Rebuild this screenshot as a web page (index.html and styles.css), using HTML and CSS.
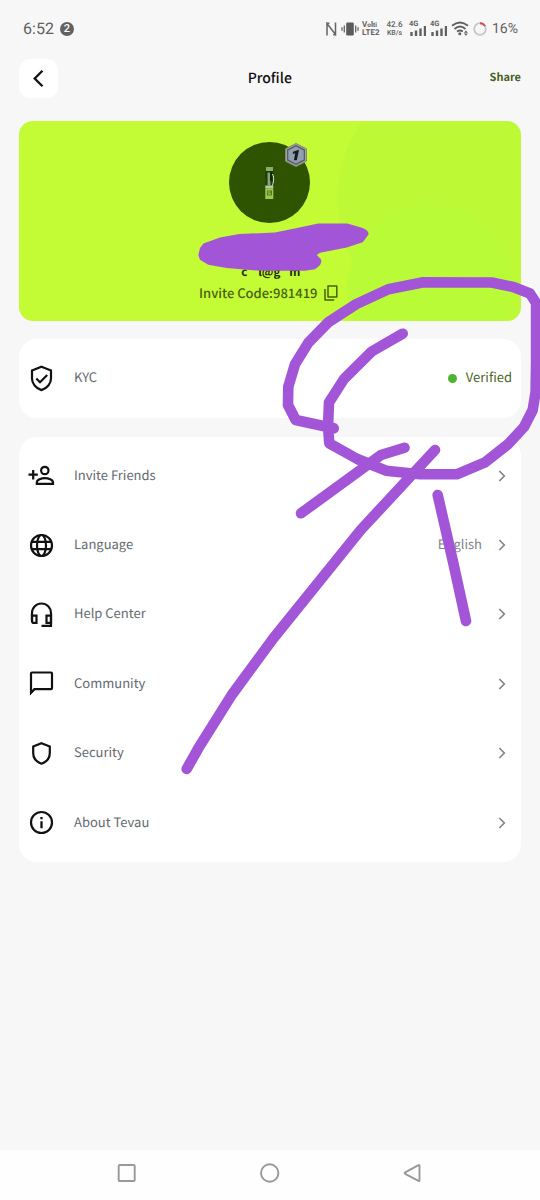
FILE: index.html
```html
<!DOCTYPE html>
<html lang="en">
<head>
<meta charset="utf-8">
<title>Profile</title>
<link rel="stylesheet" href="styles.css">
</head>
<body>
<div class="screen">
  <div class="status">
    <span class="clock">6:52</span>
    <span class="count">2</span>
    <svg class="nfc" width="11" height="14" viewBox="0 0 11 14"><path d="M1 13.5V1.500L9.500 12.500V.500M1 1.200l2.400 0M9.500 12.800H7.200" fill="none" stroke="#666" stroke-width="1.500"/></svg>
    <svg class="vibrate" width="18" height="14" viewBox="0 0 18 14"><rect x="5.200" y=".5" width="7.600" height="13" rx="1.200" fill="#5c5c5c"/><path d="M3.300 3.500v7M14.700 3.500v7M1 5.200v3.600M17 5.200v3.600" stroke="#666" stroke-width="1.300"/></svg>
    <span class="stack lte"><span>V<i>o</i>l<i>ti</i></span><span>LTE2</span></span>
    <span class="stack speed"><span>42.6</span><span>KB/s</span></span>
    <span class="signal"><span>4G</span><svg width="16" height="10" viewBox="0 0 16 10"><path d="M1.500 10V6M6 10V4.500M10.500 10V2.500M15 10V0" stroke="#606060" stroke-width="2.400"/></svg></span>
    <span class="signal second"><span>4G</span><svg width="16" height="10" viewBox="0 0 16 10"><path d="M1.500 10V6M6 10V4.500M10.500 10V2.500M15 10V0" stroke="#606060" stroke-width="2.400"/></svg></span>
    <svg class="wifi" width="18" height="15" viewBox="0 0 18 15"><path d="M1 4.800Q9-1.800 17 4.800M3.500 7.900Q9 3.300 14.500 7.900M6 10.600q3-2.300 5.800 0" fill="none" stroke="#606060" stroke-width="1.900"/><circle cx="8.800" cy="12.800" r="1.500" fill="#606060"/><path d="M14.900 9.500l2 2.200h-4zM14.900 14.700l2-2.200h-4z" fill="#606060"/></svg>
    <svg class="battery" width="14" height="14" viewBox="0 0 14 14"><circle cx="7" cy="7" r="5.800" fill="none" stroke="#c6c6c6" stroke-width="1.800"/><path d="M7 1.200a5.800 5.800 0 0 1 5 2.900" fill="none" stroke="#d84a50" stroke-width="1.900"/></svg>
    <span class="percent">16%</span>
  </div>

  <header class="topbar">
    <span class="back"><svg width="39" height="39" viewBox="0 0 39 39"><path d="M23.500 11.700L15.700 19.500l7.800 7.800" fill="none" stroke="#111" stroke-width="2.300"/></svg></span>
    <h1>Profile</h1>
    <span class="share">Share</span>
  </header>

  <section class="hero">
    <div class="avatar">
      <svg width="12" height="34" viewBox="0 0 12 34"><path d="M2 1h7v4H2z" fill="#8bab68"/><path d="M1.500 5h8v16h-8z" fill="#173d12"/><path d="M3.500 6.500h3v13h-3z" fill="#8aa36b"/><path d="M6 6h1.800v9H6z" fill="#082b0d"/><path d="M8.500 8c2 4 1 9-.5 12" fill="none" stroke="#e4eedf"/><path d="M1.300 19.500h8v3h-8z" fill="#b8c9a2"/><path d="M1.300 22.500h8V33h-8z" fill="#9fc94a"/><path d="M3 24.500h5v5H3z" fill="#4d7822"/><path d="M3.800 26h2.500M4 28h3" stroke="#b4d963"/></svg>
      <svg class="level" width="24" height="26" viewBox="0 0 24 26"><path d="M12 1.500l10.500 5.300v12.400L12 24.500 1.500 19.200V6.800z" fill="#a2a49d" stroke="#858b72"/><path d="M12 3l9 4.600v10.800L12 23l-9-4.600V7.600z" fill="#575d67"/><path d="M12 4.500l7.700 4v9L12 21.500l-7.700-4v-9z" fill="#929eb2"/><path d="M9 9.800l6-2.100-2.200 10.600H9.900l1.300-7.100-2.400.8z" fill="#17191d"/></svg>
    </div>
    <div class="email"><span>c</span><span>l@g</span><span>m</span></div>
    <div class="invite"><span>Invite Code:981419</span><svg width="14" height="16" viewBox="0 0 14 16"><path d="M4 1h8.800v11H4zM1 4v11h9.200" fill="none" stroke="#49620f" stroke-width="1.500" stroke-linejoin="round"/></svg></div>
  </section>

  <section class="panel kyc">
    <div class="row">
      <svg class="icon" viewBox="0 0 27 27"><path d="M13.500 1.800L23 5.400v8.100c0 5-3.800 9.700-9.500 11.600C7.800 23.200 4 18.500 4 13.500V5.400z" fill="none" stroke="#111" stroke-width="2.200"/><path d="M8.300 13.500l3.700 3.700 7.200-7.200" fill="none" stroke="#111" stroke-width="2.200"/></svg>
      <span class="label">KYC</span><span class="dot"></span><span class="verified">Verified</span>
    </div>
  </section>

  <section class="panel menu">
    <div class="row">
      <svg class="icon" viewBox="0 0 27 27"><path d="M5.200 8v9.500M.500 12.700h9.300" stroke="#111" stroke-width="2.200"/><circle cx="16.800" cy="8.500" r="3.700" fill="none" stroke="#111" stroke-width="2.200"/><path d="M8.800 21.800v-1.400c0-2.800 4.800-4.300 8.100-4.300s8.100 1.500 8.100 4.300v1.400z" fill="none" stroke="#111" stroke-width="2.200"/></svg>
      <span class="label">Invite Friends</span><svg class="chev" viewBox="0 0 8 12"><path d="M1.300 1L6.300 6l-5 5"/></svg>
    </div>
    <div class="row">
      <svg class="icon" viewBox="0 0 27 27"><g fill="none" stroke="#111" stroke-width="2.200"><circle cx="13.500" cy="13.500" r="10.500"/><ellipse cx="13.500" cy="13.500" rx="4.500" ry="10.500"/><path d="M3.800 9.900h19.400M3.800 17.100h19.400"/></g></svg>
      <span class="label">Language</span><span class="value">English</span><svg class="chev" viewBox="0 0 8 12"><path d="M1.300 1L6.300 6l-5 5"/></svg>
    </div>
    <div class="row">
      <svg class="icon" viewBox="0 0 27 27"><g fill="none" stroke="#111" stroke-width="2.200"><path d="M4 20V12a9.500 9.500 0 0 1 19 0v12.800h-9.500"/><path d="M4 14.700h4.500v7.200H6a2 2 0 0 1-2-2zM18.500 14.700H23v7.200h-4.500z"/></g></svg>
      <span class="label">Help Center</span><svg class="chev" viewBox="0 0 8 12"><path d="M1.300 1L6.300 6l-5 5"/></svg>
    </div>
    <div class="row">
      <svg class="icon" viewBox="0 0 27 27"><path d="M3 22.800V3.500c0-.6.400-1 1-1h19c.6 0 1 .4 1 1v14.700c0 .6-.4 1-1 1H6.400z" fill="none" stroke="#111" stroke-width="2.200"/><path d="M2 20v5l5-5z" fill="#111"/></svg>
      <span class="label">Community</span><svg class="chev" viewBox="0 0 8 12"><path d="M1.300 1L6.300 6l-5 5"/></svg>
    </div>
    <div class="row">
      <svg class="icon" viewBox="0 0 27 27"><path d="M13.500 3.300l8.300 3.200v6.600c0 4.800-3.300 8.900-8.300 10.600-5-1.700-8.300-5.800-8.300-10.600V6.500z" fill="none" stroke="#111" stroke-width="2.200"/></svg>
      <span class="label">Security</span><svg class="chev" viewBox="0 0 8 12"><path d="M1.300 1L6.300 6l-5 5"/></svg>
    </div>
    <div class="row">
      <svg class="icon" viewBox="0 0 27 27"><circle cx="13.500" cy="13.500" r="10.500" fill="none" stroke="#111" stroke-width="2.200"/><path d="M13.500 12.300v6.900M13.500 8v2.300" stroke="#111" stroke-width="2.300"/></svg>
      <span class="label">About Tevau</span><svg class="chev" viewBox="0 0 8 12"><path d="M1.300 1L6.300 6l-5 5"/></svg>
    </div>
  </section>

  <nav class="navbar">
    <svg width="20" height="20" viewBox="0 0 20 20"><rect x="1.700" y="2" width="16" height="16" rx="1"/></svg>
    <svg width="20" height="20" viewBox="0 0 20 20"><circle cx="9.700" cy="10" r="8.700"/></svg>
    <svg width="20" height="20" viewBox="0 0 20 20"><path d="M17.500 2.700v14.600c0 .7-.5.900-1 .6L3.200 10.800c-.7-.4-.7-1.100 0-1.500L16.500 2.100c.5-.3 1-.1 1 .6z"/></svg>
  </nav>

  <!-- Marker strokes drawn over the page -->
  <svg class="marker" width="540" height="1200" viewBox="0 0 540 1200">
    <path class="blob" d="M198.300 255L200 248l3.500-4.500 16.500-6 19.300-3.500 35.700-1.500 22-4.500 21.300-4.500h29l15.400 4.500c4 1.500 6.300 4 5.800 6.500l-5.800 7.800-16 5.200-26.700 5.200-3.300 2.200 3.800 3.800c1.500 2 .8 5-1.500 7.300l-4 3.300-10 1.400h-45l-33.300-2.700-18.400-3.300-8.300-5z"/>
    <path d="M402.700 333.700L371.700 351.500 344 379l-15 23.300-1 24.400 1.300 16.600 28 15.700 28.700 11.700 34 3.600h36.700l28.300-12L508.300 444l15.700-17 8.700-17 2.900-18 .5-30V303l-6.100-9.500-16.700-6.500-21.600-4.500-68.400-.2-35 7L356 304.300l-27.700 18-20 20.400L295 364.300l-6.700 22.400-.3 18.300 7.700 15 38 8.300"/>
    <path d="M301 513.300l67-48.800 13-9.500 23.500-7.300"/>
    <path d="M435 450l-74.300 80-87.400 108.300-41.600 56.700-33.400 53.300-11.600 20.700"/>
    <path d="M437.700 495l15.300 66.700 13 59.300"/>
  </svg>
</div>
</body>
</html>
```

FILE: styles.css
```css
* { box-sizing: border-box; }
body { margin: 0; background: #f7f7f7; font-family: "Noto Sans CJK SC", "Noto Sans", sans-serif; text-rendering: geometricPrecision; }
.screen { position: relative; width: 540px; height: 1200px; overflow: hidden; display: flex; flex-direction: column; background: #f7f7f7; }
svg { display: block; flex: none; }

.status { height: 59px; padding: 0 0 2px 23px; display: flex; align-items: center; color: #626262; font-family: Roboto, sans-serif; white-space: nowrap; }
.clock { width: 31px; font-size: 16px; letter-spacing: 0.050px; }
.count { width: 14px; height: 14px; margin-left: 6px; border-radius: 50%; background: #626262; color: #fff; font-size: 11px; line-height: 14.500px; font-weight: 500; text-align: center; }
.nfc { margin-left: 252px; }
.vibrate { margin-left: 4px; }
.stack { display: flex; flex-direction: column; font-size: 8px; line-height: 8px; font-weight: 700; }
.stack i { font-size: 6.500px; font-style: normal; }
.lte { width: 19px; margin-left: 3px; }
.speed { width: 17px; margin-left: 5px; align-items: center; font-weight: 500; }
.speed span:last-child { font-size: 7px; }
.signal { width: 17px; height: 15px; margin-left: 7px; position: relative; display: flex; align-items: flex-end; }
.signal span { position: absolute; left: -1px; top: -1px; font-size: 7.500px; line-height: 8px; font-weight: 700; }
.second { margin-left: 4px; }
.wifi { margin-left: 3px; }
.battery { margin-left: 4px; }
.percent { margin-left: 5px; font-size: 14px; }

.topbar { height: 39px; padding: 0 19px 0 18.500px; display: grid; grid-template-columns: 100px 1fr 100px; align-items: center; }
.back { width: 39px; height: 39px; border-radius: 11px; background: #fff; }
.topbar h1 { margin: -2px 0 0; font-size: 14px; line-height: 20px; font-weight: 500; color: #111; text-align: center; }
.share { margin-top: -3px; text-align: right; font-size: 11px; line-height: 16px; font-weight: 700; color: #41621c; }

.hero { height: 200px; margin: 22.500px 19px 0 18.500px; padding-top: 21.500px; border-radius: 14px; display: flex; flex-direction: column; align-items: center;
  background: radial-gradient(circle at 411px 167px, #b9fb37 0 82px, transparent 83px), radial-gradient(circle at 455px 78px, #bdfa35 0 136px, transparent 137px), #c3fb34; }
.avatar { position: relative; width: 81px; height: 81px; border-radius: 50%; background: #2e5301; display: flex; align-items: center; justify-content: center; }
.level { position: absolute; left: 55px; top: 0; }
.email { width: 58px; height: 18px; margin-top: 40px; margin-left: 1px; display: grid; grid-template-columns: 17px 31px 10px; font-size: 11.500px; line-height: 18px; font-weight: 700; color: #1b2b05; }
.invite { margin-top: 2px; margin-left: -2px; display: flex; align-items: center; gap: 7px; font-size: 13px; line-height: 20px; font-weight: 500; color: #49620f; white-space: nowrap; }

.panel { margin: 18.500px 19px 0 18.500px; border-radius: 18px; background: #fff; }
.kyc { height: 79px; padding: 4.500px 0; }
.menu { height: 425px; padding: 4px 0; margin-top: 19px; }
.row { height: 69.400px; padding: 0 15px 0 9.500px; display: flex; align-items: center; font-size: 13px; line-height: 20px; color: #646970; }
.kyc .row { padding-right: 9px; }
.icon { width: 27px; height: 27px; margin-right: 19px; }
.label { flex: 1; }
.label, .value, .verified { padding-bottom: 2px; }
.dot { width: 9px; height: 9px; margin-right: 9px; border-radius: 50%; background: #4cb432; }
.verified { color: #4b6429; }
.value { margin-right: 16px; color: #808388; }
.chev { width: 8px; height: 12px; }
.chev path { fill: none; stroke: #81868c; stroke-width: 1.700; }

.navbar { height: 50px; margin-top: auto; padding: 0 118px 4px 117px; display: flex; align-items: center; justify-content: space-between; background: #fefefe; }
.navbar svg { fill: none; stroke: #999; stroke-width: 1.900; }

.marker { position: absolute; left: 0; top: 0; pointer-events: none; }
.marker path { fill: none; stroke: #a355d8; stroke-width: 10.600; stroke-linecap: round; stroke-linejoin: round; }
.marker .blob { fill: #a355d8; stroke: none; }
```
